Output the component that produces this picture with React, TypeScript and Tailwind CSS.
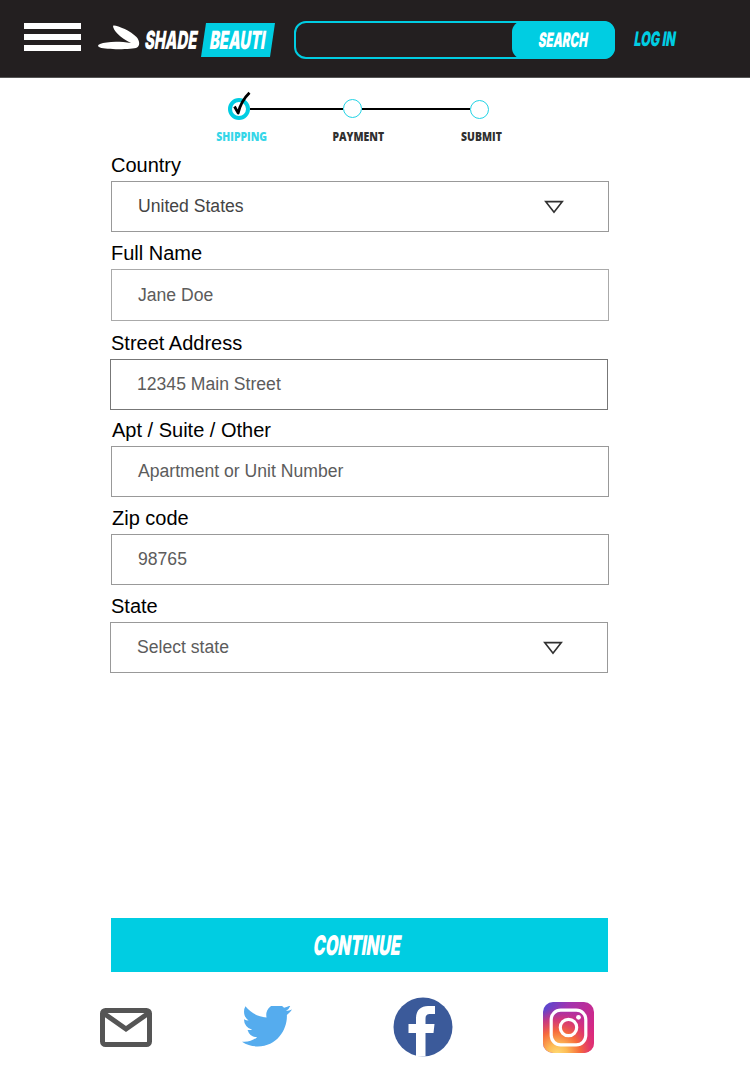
import React from 'react';
import { clsx } from 'clsx';

interface Field {
  label: string;
  value: string;
  isSelect?: boolean;
  rowClass: string;
  boxClass: string;
  valueClass: string;
}

const fields: Field[] = [
  { label: 'Country', value: 'United States', isSelect: true, rowClass: 'h-[31px] pl-px', boxClass: 'ml-px h-[51px] border-[#999]', valueClass: 'text-[#444]' },
  { label: 'Full Name', value: 'Jane Doe', rowClass: 'h-[37px] pl-px', boxClass: 'ml-px h-[52px] border-[#aaa]', valueClass: 'text-[#5c5c5c]' },
  { label: 'Street Address', value: '12345 Main Street', rowClass: 'h-[38px] pl-px', boxClass: 'h-[51px] border-[#777]', valueClass: 'text-[#5c5c5c]' },
  { label: 'Apt / Suite / Other', value: 'Apartment or Unit Number', rowClass: 'h-[36px] pl-0.5', boxClass: 'ml-px h-[51px] border-[#999]', valueClass: 'text-[#5c5c5c]' },
  { label: 'Zip code', value: '98765', rowClass: 'h-[37px] pl-0.5', boxClass: 'ml-px h-[51px] border-[#999]', valueClass: 'text-[#5c5c5c]' },
  { label: 'State', value: 'Select state', isSelect: true, rowClass: 'h-[37px] pl-px', boxClass: 'h-[51px] border-[#999]', valueClass: 'text-[#5c5c5c]' },
];

// Condensed, slanted comic style lettering
const Display = ({ children, className, textClass }: { children: React.ReactNode; className?: string; textClass: string }) => (
  <span className={clsx('flex items-center justify-center font-[Inter,sans-serif] font-black whitespace-nowrap leading-none', className)}>
    <span className={clsx('block shrink-0', textClass)}>{children}</span>
  </span>
);

const Header = () => (
  <header className="flex h-[78px] items-start border-b border-[#555] bg-[#231f20]">
    <button aria-label="Menu" className="mt-[22.5px] ml-6 flex w-[57px] flex-col gap-[5px]">
      <span className="h-[6px] bg-white" />
      <span className="h-[6px] bg-white" />
      <span className="h-[6px] bg-white" />
    </button>
    <div className="ml-[17px] flex items-start">
      <svg viewBox="0 0 42 25" className="mt-[25px] h-[25px] w-[42px]" fill="#fff">
        <path d="M15.500 0.500C19 0 33 6 38.500 12C42 16 42 20.500 39 22.500C35 24.600 9 25 2 22.500C-.5 21.500-.5 20 2 19C8 16.500 20 15.700 33 18C27 15.500 17 8 15.300 2.500C15 1.200 15 .7 15.500.500Z" />
      </svg>
      <Display className="mt-[27px] ml-1 h-[27px] w-[54px] text-white" textClass="text-[25px] scale-x-[.59] -skew-x-[14deg]">SHADE</Display>
      <div className="mt-[23px] ml-[3px] h-[34px] w-[74px] bg-[#00cde2] [clip-path:polygon(5px_0,100%_0,69px_100%,0_100%)]">
        <Display className="h-[34px] w-[73px] text-white" textClass="text-[25px] scale-x-[.59] -skew-x-[14deg]">BEAUTI</Display>
      </div>
    </div>
    <div className="mt-[21px] ml-[19px] flex h-[38px] w-[321px] justify-end rounded-[12px] border-2 border-[#00cde2]">
      <button className="-my-0.5 -mr-0.5 flex w-[103px] items-center justify-center rounded-[11px] bg-[#00cde2]">
        <Display className="w-[52px] text-white" textClass="text-[20px] scale-x-[.58] -skew-x-[14deg]">SEARCH</Display>
      </button>
    </div>
    <Display className="mt-[21px] ml-[17px] h-[36px] w-[46px] text-[#00cde2]" textClass="text-[20px] scale-x-[.62] -skew-x-[14deg]">LOG IN</Display>
  </header>
);

const StepLabel = ({ children, className, textClass }: { children: React.ReactNode; className: string; textClass: string }) => (
  <span className={clsx('flex shrink-0 justify-center font-["Open_Sans",sans-serif] text-[13px] leading-none font-extrabold whitespace-nowrap', className)}>
    <span className={clsx('block shrink-0', textClass)}>{children}</span>
  </span>
);

const Stepper = () => (
  <div className="h-[72px] pt-5">
    <div className="ml-[228px] flex h-[22px] w-[261px] items-center">
      <div className="relative size-[22px] shrink-0 rounded-full border-[4.500px] border-[#00cde2]">
        <svg viewBox="0 0 20 26" className="absolute -top-[10px] left-0 h-[26px] w-5 overflow-visible" fill="none" stroke="#000">
          <path d="M2.500 14.500L6.200 21C8 13 12 6 17.500 .7" strokeWidth="2.800" strokeLinejoin="round" />
        </svg>
      </div>
      <div className="h-0.5 flex-1 bg-black" />
      <div className="mb-px size-[19px] rounded-full border-[1.500px] border-[#22d3e5]" />
      <div className="h-0.5 w-[108px] bg-black" />
      <div className="size-[19px] rounded-full border-[1.500px] border-[#22d3e5]" />
    </div>
    <div className="mt-[10px] ml-[215px] flex">
      <StepLabel className="w-[54px] text-[#35d6e8]" textClass="scale-x-[.8]">SHIPPING</StepLabel>
      <StepLabel className="ml-[62px] w-[54px] text-[#303030]" textClass="scale-x-[.8]">PAYMENT</StepLabel>
      <StepLabel className="ml-[75px] w-[43px] text-[#303030]" textClass="scale-x-[.8]">SUBMIT</StepLabel>
    </div>
  </div>
);

const FormField = ({ field }: { field: Field }) => (
  <div>
    <label className={clsx('flex items-end pb-[4px] text-[20px] leading-6 text-black', field.rowClass)}>{field.label}</label>
    <div className={clsx('flex w-[497.500px] items-center justify-between border pr-11 pl-[26px] text-[17.600px]', field.boxClass, field.valueClass)}>
      <span>{field.value}</span>
      {field.isSelect && (
        <svg viewBox="0 0 20 14" className="h-[14px] w-5" fill="none" stroke="#303030" strokeWidth="1.700">
          <path d="M1.800 1.700H18.200L10 12.200Z" />
        </svg>
      )}
    </div>
  </div>
);

const SocialLinks = () => (
  <footer className="flex h-[60px] items-center pl-[99px]">
    <svg viewBox="0 0 54 40" className="h-10 w-[54px]" fill="none" stroke="#555" strokeWidth="5">
      <rect x="3.500" y="3.500" width="47" height="34" rx="3" />
      <path d="M5 6.500L27 22L49 6.500" />
    </svg>
    <svg viewBox="0 3 24 19.500" className="ml-[89px] h-[42px] w-[50px]" preserveAspectRatio="none" fill="#55acee">
      <path d="M23.953 4.570a10 10 0 01-2.825.775 4.958 4.958 0 002.163-2.723c-.951.555-2.005.959-3.127 1.184a4.920 4.920 0 00-8.384 4.482C7.690 8.095 4.067 6.130 1.640 3.162a4.822 4.822 0 00-.666 2.475c0 1.710.870 3.213 2.188 4.096a4.904 4.904 0 01-2.228-.616v.060a4.923 4.923 0 003.946 4.827 4.996 4.996 0 01-2.212.085 4.936 4.936 0 004.604 3.417 9.867 9.867 0 01-6.102 2.105c-.390 0-.779-.023-1.170-.067a13.995 13.995 0 007.557 2.209c9.053 0 13.998-7.496 13.998-13.985 0-.210 0-.420-.015-.630A9.935 9.935 0 0024 4.590z" />
    </svg>
    <svg viewBox="0 0 60 60" className="ml-[101px] size-[60px]">
      <circle cx="30" cy="30" r="29.500" fill="#3b5a9a" />
      <path d="M23 59V36H15.500V27H23V21.500C23 13 28 9 35 9H42V17H37.500C33.500 17 32.500 19 32.500 22V27H41.500L40.500 36H32.500V59.300Q28 60 23 59Z" fill="#fff" />
    </svg>
    <svg viewBox="0 0 51 51" className="ml-[90px] size-[51px]">
      <defs>
        <linearGradient id="igBase" x1="0" y1="0" x2="1" y2=".6">
          <stop offset="0" stopColor="#4c4bd5" />
          <stop offset=".38" stopColor="#a035b0" />
          <stop offset="1" stopColor="#db2680" />
        </linearGradient>
        <radialGradient id="igWarm" cx=".28" cy="1.020" r=".9">
          <stop offset="0" stopColor="#ffdb74" />
          <stop offset=".22" stopColor="#fdbb55" />
          <stop offset=".5" stopColor="#f66a3c" />
          <stop offset=".75" stopColor="#e33a67" stopOpacity=".75" />
          <stop offset="1" stopColor="#d62b80" stopOpacity="0" />
        </radialGradient>
      </defs>
      <rect width="51" height="51" rx="10" fill="url(#igBase)" />
      <rect width="51" height="51" rx="10" fill="url(#igWarm)" />
      <g fill="none" stroke="#fff" strokeWidth="3.200">
        <rect x="8.200" y="8.200" width="34.600" height="34.600" rx="9.500" />
        <circle cx="25.500" cy="25.500" r="8.200" />
      </g>
      <circle cx="35.500" cy="15.300" r="2.400" fill="#fff" />
    </svg>
  </footer>
);

export default function App() {
  return (
    <div className="h-[1069px] w-[750px] overflow-hidden bg-white font-['Liberation_Sans',Arial,sans-serif]">
      <Header />
      <Stepper />
      <form className="flex h-[768px] flex-col pl-[110px]">
        {fields.map((field) => (
          <FormField key={field.label} field={field} />
        ))}
      </form>
      <button className="ml-[111px] flex h-[54px] w-[497px] items-center justify-center bg-[#00cde2]">
        <Display className="mr-1 w-[92px] text-white" textClass="text-[27px] scale-x-[.6] -skew-x-[14deg]">CONTINUE</Display>
      </button>
      <div className="h-[25px]" />
      <SocialLinks />
    </div>
  );
}
